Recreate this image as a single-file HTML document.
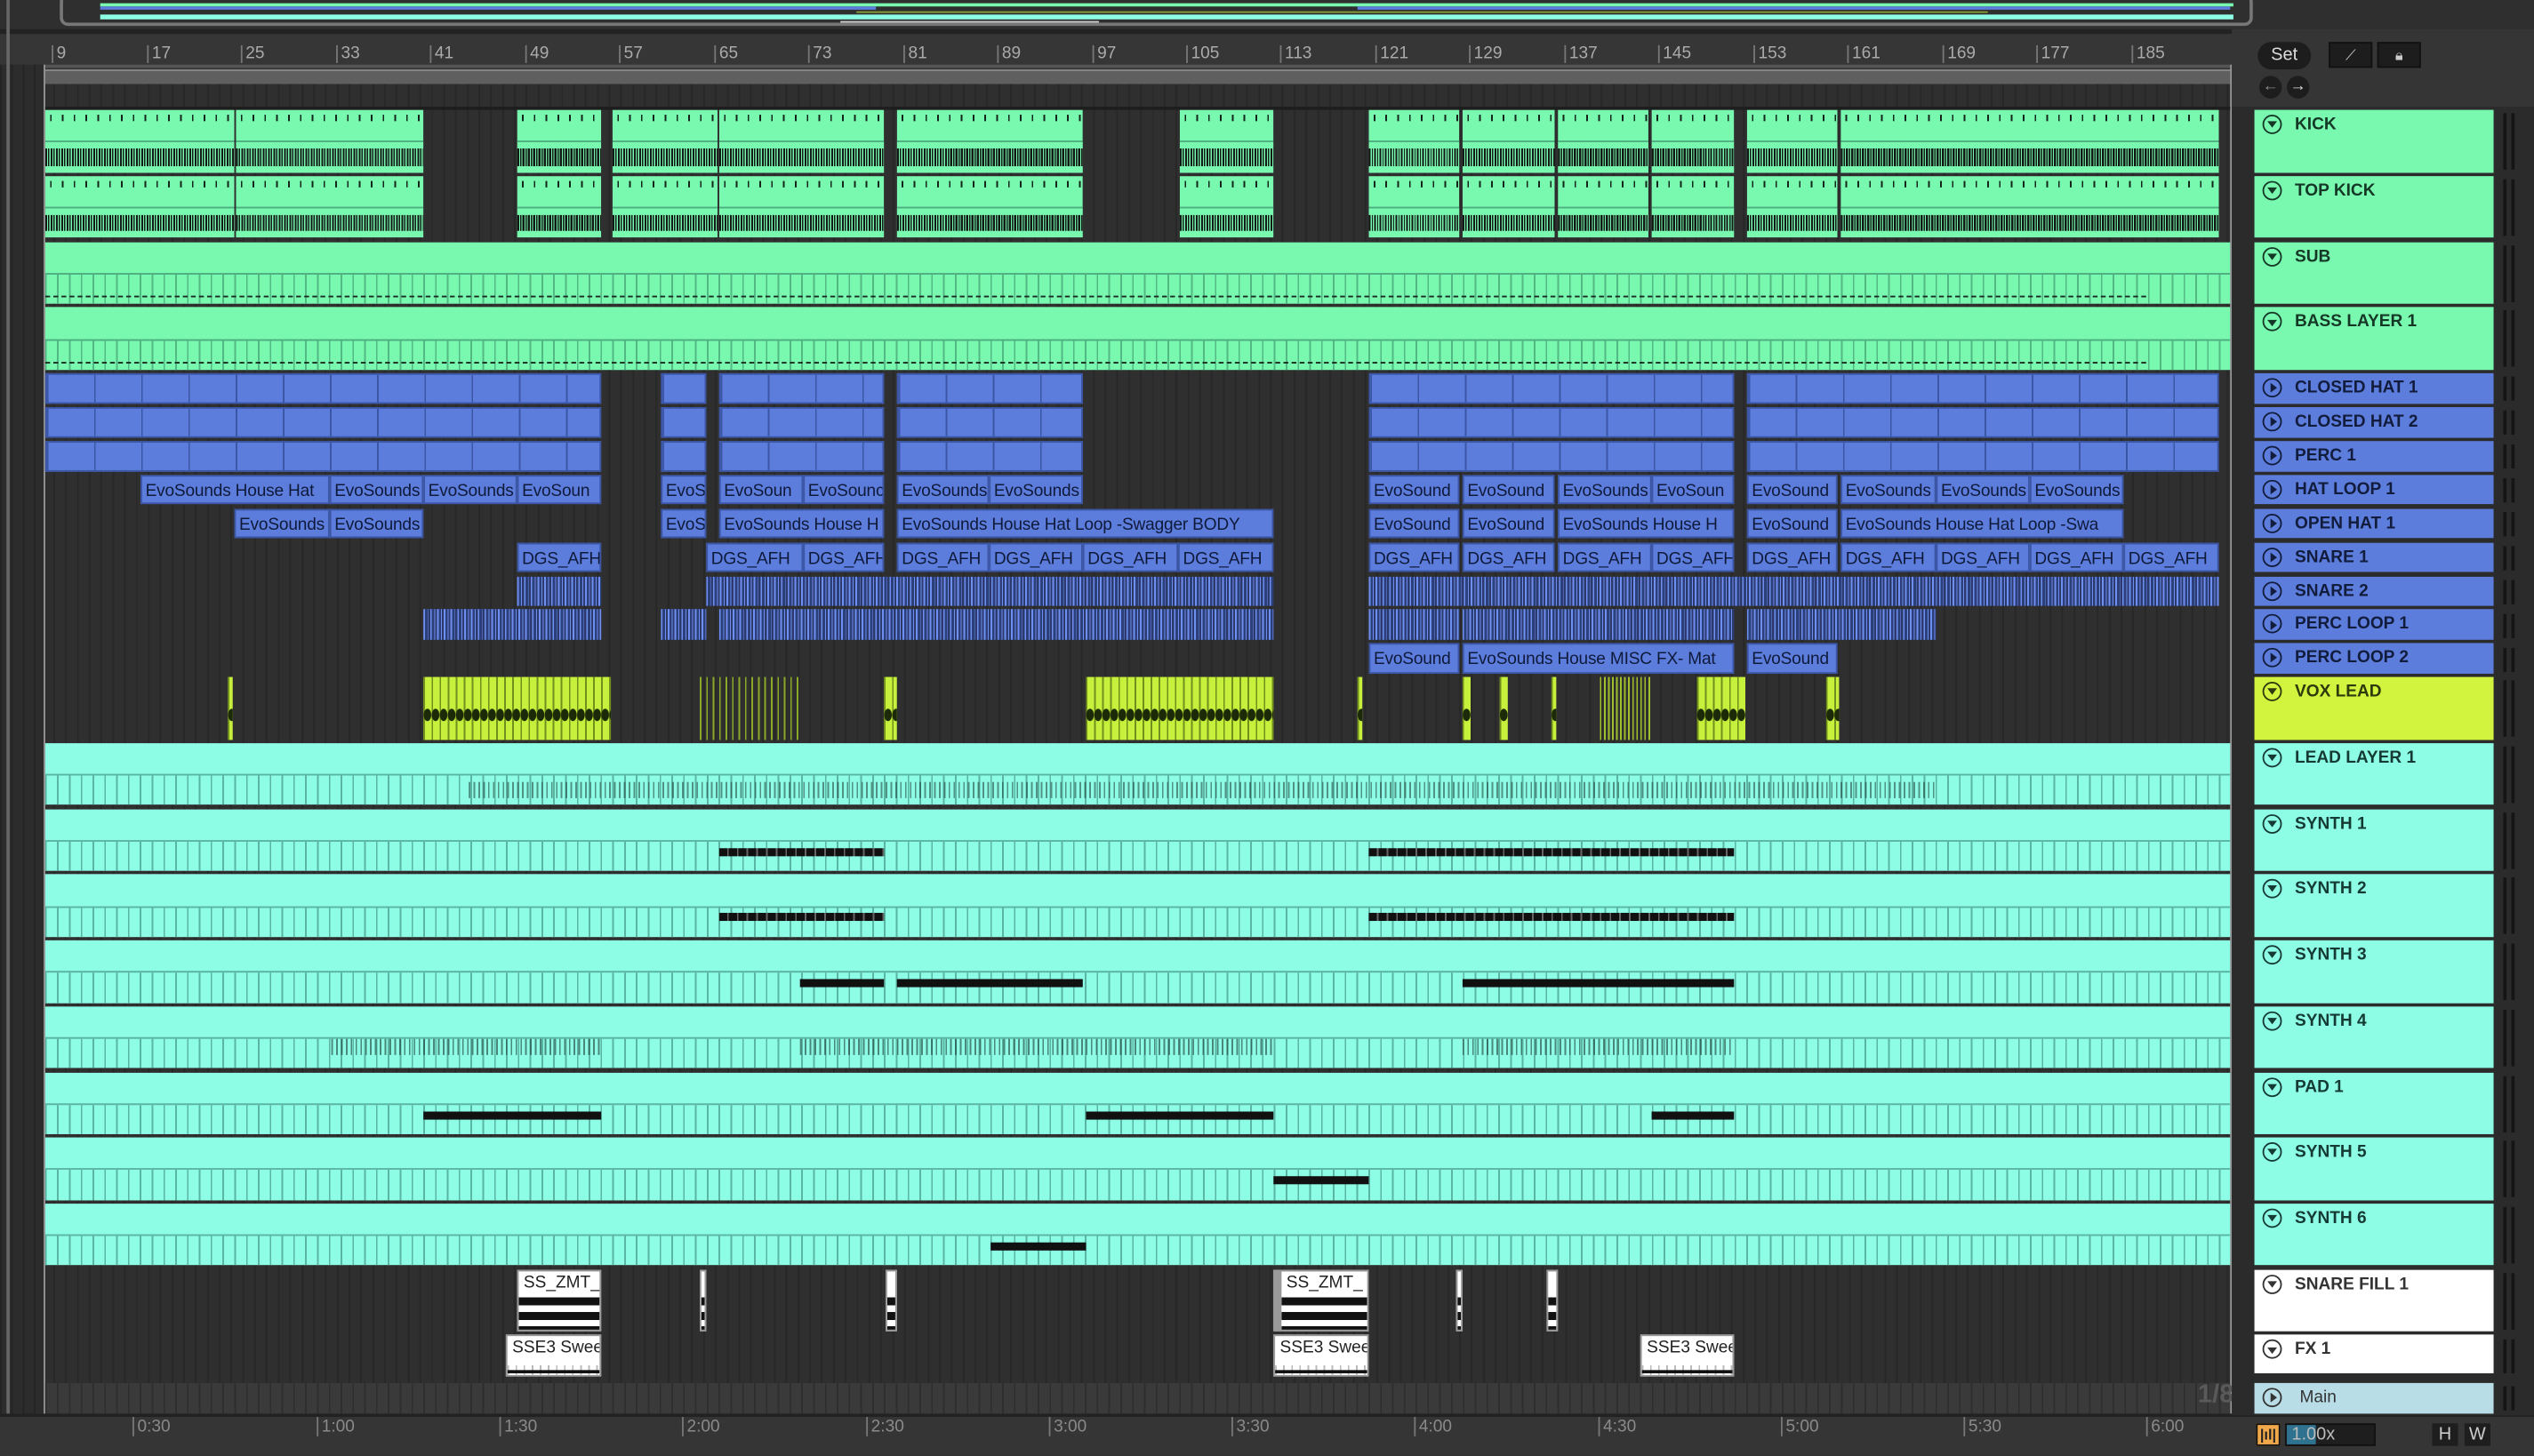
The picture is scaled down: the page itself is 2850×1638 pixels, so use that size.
<!DOCTYPE html>
<html><head><meta charset="utf-8">
<style>
*{margin:0;padding:0;box-sizing:border-box}
html,body{width:2850px;height:1638px;overflow:hidden;background:#2b2b2b}
#s{position:absolute;left:0;top:0;width:1568px;height:901px;transform:scale(1.8176);transform-origin:0 0;font-family:"Liberation Sans",sans-serif;background:#363636}
.a{position:absolute}
.arr{position:absolute;left:28px;top:52px;width:1352px;height:804px;background:#2f2f2f;
 background-image:repeating-linear-gradient(90deg,#272727 0 1px,transparent 1px 7.31px);background-position:5px 0}
.row{position:absolute;left:0;width:1352px;background:transparent}
.c{position:absolute;top:0;height:100%;overflow:hidden;white-space:nowrap}
.g{background:#79f9b0}
.b{background:#5d7ddc;border:1px solid #3c56a6}
.bs{background-color:#5d7ddc;background-image:repeating-linear-gradient(90deg,#3c56a6 0 1px,transparent 1px 29.2px);border:1px solid #3c56a6}
.cy{background:#8efde6}
.lab{font-size:10.5px;color:#0f1a3a;line-height:18px;padding-left:2px;letter-spacing:-.1px}
.hd{position:absolute;left:1395px;width:148px;font-weight:bold;font-size:10.5px;color:#153826;padding-left:25px;line-height:18px}
.ic{position:absolute;left:5px;top:3px;width:12px;height:12px;border:1.2px solid currentColor;border-radius:50%}
.dn::after{content:"";position:absolute;left:2.2px;top:3.2px;border-left:3.4px solid transparent;border-right:3.4px solid transparent;border-top:4.5px solid currentColor}
.rt::after{content:"";position:absolute;left:3.5px;top:2.2px;border-top:3.4px solid transparent;border-bottom:3.4px solid transparent;border-left:4.5px solid currentColor}
.mt{position:absolute;left:1549px;width:7px;border-left:2px solid #151515;border-right:2px solid #151515}
.gl{background-image:repeating-linear-gradient(90deg,#52b884 0 1px,transparent 1px 7.31px)}
.cl{background-image:repeating-linear-gradient(90deg,#5bb5a3 0 1px,transparent 1px 7.31px)}
.kt{background-color:#79f9b0;background-image:repeating-linear-gradient(90deg,transparent 0 3px,#14261b 3px 4px,transparent 4px 7.31px);background-size:100% 4px;background-repeat:repeat-x;background-position:0 3px}
.wf{background-color:#79f9b0;background-image:linear-gradient(#79f9b0 0 4px,transparent 4px calc(100% - 4px),#79f9b0 calc(100% - 4px)),repeating-linear-gradient(90deg,#111a14 0 1.2px,transparent 1.2px 1.8px,#111a14 1.8px 2.6px,transparent 2.6px 3.3px);border-top:1px solid #4fae80}
.rl{position:absolute;top:28px;font-size:10.5px;color:#aaa;border-left:1px solid #777;padding-left:2px;line-height:11px}
.tl{position:absolute;top:877px;font-size:10.5px;color:#8a8a8a;border-left:1px solid #777;padding-left:2px;line-height:12px}
.bar{position:absolute;height:5px;background:#111}
.vl{background-image:repeating-linear-gradient(90deg,#6f8ff0 0 1px,#2b3f7a 1px 2.5px,#6f8ff0 2.5px 3px,#2b3a6a 3px 4.2px);background-color:#34447a}
.y{background-color:#c6f03c;background-image:radial-gradient(ellipse 2.5px 4px at 50% 50%,#1d2a08 0 90%,transparent 100%),repeating-linear-gradient(90deg,#708f1c 0 1px,transparent 1px 5px);background-size:5px 9px,auto;background-position:0 19px,0 0;background-repeat:repeat-x,repeat}
.w{background:#fff;border:1px solid #999;color:#222;font-size:10.5px;line-height:14px;padding-left:3px}
</style></head><body><div id="s">

<!-- overview -->
<div class="a" style="left:0;top:0;width:1568px;height:18px;background:#2f2f2f"></div>
<div class="a" style="left:37px;top:-4px;width:1357px;height:20px;border:2px solid #777;border-radius:5px"></div>
<div class="a" style="left:62px;top:2px;width:1320px;height:2px;background:#79f9b0"></div>
<div class="a" style="left:62px;top:4px;width:480px;height:2px;background:#5d7ddc"></div>
<div class="a" style="left:840px;top:4px;width:540px;height:2px;background:#5d7ddc"></div>
<div class="a" style="left:530px;top:7px;width:700px;height:1px;background:#c6f03c;opacity:.6"></div>
<div class="a" style="left:62px;top:9px;width:1320px;height:3px;background:#8efde6"></div>
<div class="a" style="left:520px;top:13px;width:160px;height:1px;background:#ccc"></div>
<div class="a" style="left:0;top:18px;width:1568px;height:3px;background:#222"></div>

<!-- ruler -->
<div class="a" style="left:28px;top:40px;width:1352px;height:2px;background:#555"></div>
<div class="rl" style="left:32px">9</div><div class="rl" style="left:91px">17</div><div class="rl" style="left:149px">25</div><div class="rl" style="left:208px">33</div><div class="rl" style="left:266px">41</div><div class="rl" style="left:325px">49</div><div class="rl" style="left:383px">57</div><div class="rl" style="left:442px">65</div><div class="rl" style="left:500px">73</div><div class="rl" style="left:559px">81</div><div class="rl" style="left:617px">89</div><div class="rl" style="left:676px">97</div><div class="rl" style="left:734px">105</div><div class="rl" style="left:792px">113</div><div class="rl" style="left:851px">121</div><div class="rl" style="left:909px">129</div><div class="rl" style="left:968px">137</div><div class="rl" style="left:1026px">145</div><div class="rl" style="left:1085px">153</div><div class="rl" style="left:1143px">161</div><div class="rl" style="left:1202px">169</div><div class="rl" style="left:1260px">177</div><div class="rl" style="left:1319px">185</div>

<!-- left margin -->
<div class="a" style="left:0;top:40px;width:28px;height:836px;background:#2c2c2c;background-image:repeating-linear-gradient(90deg,#242424 0 1px,transparent 1px 7px)"></div>
<div class="a" style="left:4px;top:0;width:2px;height:901px;background:#666"></div>

<div class="arr">
 <div class="a" style="left:0;top:-9px;width:1352px;height:9px;background:#5f5f5f;border-top:1px solid #888"></div>
</div>
<div class="a" style="left:27px;top:40px;width:1px;height:836px;background:#999"></div>
<div class="a" style="left:1380px;top:40px;width:1px;height:836px;background:#999"></div>

<!-- tracks area -->
<div class="a" style="left:28px;top:0;width:1352px;height:901px">
<div class="a" style="left:0;top:66px;width:1352px;height:2px;background:#1e1e1e"></div>

<!-- KICK -->
<div class="row" style="top:68.2px;height:38.5px">
<div class="c" style="left:0;width:117px"><div class="a kt" style="width:100%;height:50%"></div><div class="a wf" style="top:50%;width:100%;height:50%"></div></div>
<div class="c" style="left:118px;width:116px"><div class="a kt" style="width:100%;height:50%"></div><div class="a wf" style="top:50%;width:100%;height:50%"></div></div>
<div class="c" style="left:292px;width:52px"><div class="a kt" style="width:100%;height:50%"></div><div class="a wf" style="top:50%;width:100%;height:50%"></div></div>
<div class="c" style="left:351px;width:65px"><div class="a kt" style="width:100%;height:50%"></div><div class="a wf" style="top:50%;width:100%;height:50%"></div></div>
<div class="c" style="left:417px;width:102px"><div class="a kt" style="width:100%;height:50%"></div><div class="a wf" style="top:50%;width:100%;height:50%"></div></div>
<div class="c" style="left:527px;width:115px"><div class="a kt" style="width:100%;height:50%"></div><div class="a wf" style="top:50%;width:100%;height:50%"></div></div>
<div class="c" style="left:702px;width:58px"><div class="a kt" style="width:100%;height:50%"></div><div class="a wf" style="top:50%;width:100%;height:50%"></div></div>
<div class="c" style="left:819px;width:56px"><div class="a kt" style="width:100%;height:50%"></div><div class="a wf" style="top:50%;width:100%;height:50%"></div></div>
<div class="c" style="left:877px;width:57px"><div class="a kt" style="width:100%;height:50%"></div><div class="a wf" style="top:50%;width:100%;height:50%"></div></div>
<div class="c" style="left:936px;width:56px"><div class="a kt" style="width:100%;height:50%"></div><div class="a wf" style="top:50%;width:100%;height:50%"></div></div>
<div class="c" style="left:994px;width:51px"><div class="a kt" style="width:100%;height:50%"></div><div class="a wf" style="top:50%;width:100%;height:50%"></div></div>
<div class="c" style="left:1053px;width:56px"><div class="a kt" style="width:100%;height:50%"></div><div class="a wf" style="top:50%;width:100%;height:50%"></div></div>
<div class="c" style="left:1111px;width:234px"><div class="a kt" style="width:100%;height:50%"></div><div class="a wf" style="top:50%;width:100%;height:50%"></div></div>
</div>
<div class="row" style="top:108.9px;height:38.5px">
<div class="c" style="left:0;width:117px"><div class="a kt" style="width:100%;height:50%"></div><div class="a wf" style="top:50%;width:100%;height:50%"></div></div>
<div class="c" style="left:118px;width:116px"><div class="a kt" style="width:100%;height:50%"></div><div class="a wf" style="top:50%;width:100%;height:50%"></div></div>
<div class="c" style="left:292px;width:52px"><div class="a kt" style="width:100%;height:50%"></div><div class="a wf" style="top:50%;width:100%;height:50%"></div></div>
<div class="c" style="left:351px;width:65px"><div class="a kt" style="width:100%;height:50%"></div><div class="a wf" style="top:50%;width:100%;height:50%"></div></div>
<div class="c" style="left:417px;width:102px"><div class="a kt" style="width:100%;height:50%"></div><div class="a wf" style="top:50%;width:100%;height:50%"></div></div>
<div class="c" style="left:527px;width:115px"><div class="a kt" style="width:100%;height:50%"></div><div class="a wf" style="top:50%;width:100%;height:50%"></div></div>
<div class="c" style="left:702px;width:58px"><div class="a kt" style="width:100%;height:50%"></div><div class="a wf" style="top:50%;width:100%;height:50%"></div></div>
<div class="c" style="left:819px;width:56px"><div class="a kt" style="width:100%;height:50%"></div><div class="a wf" style="top:50%;width:100%;height:50%"></div></div>
<div class="c" style="left:877px;width:57px"><div class="a kt" style="width:100%;height:50%"></div><div class="a wf" style="top:50%;width:100%;height:50%"></div></div>
<div class="c" style="left:936px;width:56px"><div class="a kt" style="width:100%;height:50%"></div><div class="a wf" style="top:50%;width:100%;height:50%"></div></div>
<div class="c" style="left:994px;width:51px"><div class="a kt" style="width:100%;height:50%"></div><div class="a wf" style="top:50%;width:100%;height:50%"></div></div>
<div class="c" style="left:1053px;width:56px"><div class="a kt" style="width:100%;height:50%"></div><div class="a wf" style="top:50%;width:100%;height:50%"></div></div>
<div class="c" style="left:1111px;width:234px"><div class="a kt" style="width:100%;height:50%"></div><div class="a wf" style="top:50%;width:100%;height:50%"></div></div>
</div>

<!-- SUB, BASS -->
<div class="row" style="top:149.6px;height:38.5px"><div class="c g" style="left:0;width:1352px;height:50%"></div><div class="c g gl" style="left:0;top:50%;width:1352px;height:50%;border-top:1px solid #4fae80"><div class="a" style="left:0;bottom:4px;width:1300px;border-bottom:1px dashed #1a2a20"></div></div></div>
<div class="row" style="top:190.4px;height:38.5px"><div class="c g" style="left:0;width:1352px;height:50%"></div><div class="c g gl" style="left:0;top:50%;width:1352px;height:50%;border-top:1px solid #4fae80"><div class="a" style="left:0;bottom:4px;width:1300px;border-bottom:1px dashed #1a2a20"></div></div></div>

<!-- CH1, CH2, PERC1 -->
<div class="row" style="top:231.1px;height:18.7px"><div class="c bs" style="left:0;width:344px"></div><div class="c bs" style="left:381px;width:28px"></div><div class="c bs" style="left:417px;width:102px"></div><div class="c bs" style="left:527px;width:115px"></div><div class="c bs" style="left:819px;width:226px"></div><div class="c bs" style="left:1053px;width:292px"></div></div>
<div class="row" style="top:252px;height:18.7px"><div class="c bs" style="left:0;width:344px"></div><div class="c bs" style="left:381px;width:28px"></div><div class="c bs" style="left:417px;width:102px"></div><div class="c bs" style="left:527px;width:115px"></div><div class="c bs" style="left:819px;width:226px"></div><div class="c bs" style="left:1053px;width:292px"></div></div>
<div class="row" style="top:272.9px;height:18.7px"><div class="c bs" style="left:0;width:344px"></div><div class="c bs" style="left:381px;width:28px"></div><div class="c bs" style="left:417px;width:102px"></div><div class="c bs" style="left:527px;width:115px"></div><div class="c bs" style="left:819px;width:226px"></div><div class="c bs" style="left:1053px;width:292px"></div></div>

<!-- HAT LOOP -->
<div class="row" style="top:293.8px;height:18.7px">
<div class="c b lab" style="left:59px;width:117px">EvoSounds House Hat</div><div class="c b lab" style="left:176px;width:58px">EvoSounds</div><div class="c b lab" style="left:234px;width:58px">EvoSounds</div><div class="c b lab" style="left:292px;width:52px">EvoSoun</div>
<div class="c b lab" style="left:381px;width:28px">EvoS</div><div class="c b lab" style="left:417px;width:52px">EvoSoun</div><div class="c b lab" style="left:469px;width:50px">EvoSounc</div>
<div class="c b lab" style="left:527px;width:57px">EvoSounds</div><div class="c b lab" style="left:584px;width:58px">EvoSounds</div>
<div class="c b lab" style="left:819px;width:56px">EvoSound</div><div class="c b lab" style="left:877px;width:57px">EvoSound</div><div class="c b lab" style="left:936px;width:58px">EvoSounds</div><div class="c b lab" style="left:994px;width:51px">EvoSoun</div>
<div class="c b lab" style="left:1053px;width:56px">EvoSound</div><div class="c b lab" style="left:1111px;width:59px">EvoSounds</div><div class="c b lab" style="left:1170px;width:58px">EvoSounds</div><div class="c b lab" style="left:1228px;width:58px">EvoSounds</div>
</div>
<!-- OPEN HAT -->
<div class="row" style="top:314.7px;height:18.7px">
<div class="c b lab" style="left:117px;width:59px">EvoSounds</div><div class="c b lab" style="left:176px;width:58px">EvoSounds</div>
<div class="c b lab" style="left:381px;width:28px">EvoS</div><div class="c b lab" style="left:417px;width:102px">EvoSounds House H</div>
<div class="c b lab" style="left:527px;width:233px">EvoSounds House Hat Loop -Swagger BODY</div>
<div class="c b lab" style="left:819px;width:56px">EvoSound</div><div class="c b lab" style="left:877px;width:57px">EvoSound</div><div class="c b lab" style="left:936px;width:109px">EvoSounds House H</div>
<div class="c b lab" style="left:1053px;width:56px">EvoSound</div><div class="c b lab" style="left:1111px;width:175px">EvoSounds House Hat Loop -Swa</div>
</div>
<!-- SNARE 1 -->
<div class="row" style="top:335.6px;height:18.7px">
<div class="c b lab" style="left:292px;width:52px">DGS_AFH</div>
<div class="c b lab" style="left:409px;width:60px">DGS_AFH</div><div class="c b lab" style="left:469px;width:50px">DGS_AFH</div>
<div class="c b lab" style="left:527px;width:57px">DGS_AFH</div><div class="c b lab" style="left:584px;width:58px">DGS_AFH</div><div class="c b lab" style="left:642px;width:59px">DGS_AFH</div><div class="c b lab" style="left:701px;width:59px">DGS_AFH</div>
<div class="c b lab" style="left:819px;width:56px">DGS_AFH</div><div class="c b lab" style="left:877px;width:57px">DGS_AFH</div><div class="c b lab" style="left:936px;width:58px">DGS_AFH</div><div class="c b lab" style="left:994px;width:51px">DGS_AFH</div>
<div class="c b lab" style="left:1053px;width:56px">DGS_AFH</div><div class="c b lab" style="left:1111px;width:59px">DGS_AFH</div><div class="c b lab" style="left:1170px;width:58px">DGS_AFH</div><div class="c b lab" style="left:1228px;width:58px">DGS_AFH</div><div class="c b lab" style="left:1286px;width:59px">DGS_AFH</div>
</div>
<!-- SNARE 2 -->
<div class="row" style="top:356.5px;height:18.7px">
<div class="c vl" style="left:292px;width:52px"></div><div class="c vl" style="left:409px;width:351px"></div><div class="c vl" style="left:819px;width:526px"></div>
</div>
<!-- PERC LOOP 1 -->
<div class="row" style="top:377.4px;height:18.7px">
<div class="c vl" style="left:234px;width:110px"></div><div class="c vl" style="left:381px;width:28px"></div><div class="c vl" style="left:417px;width:343px"></div><div class="c vl" style="left:819px;width:56px"></div><div class="c vl" style="left:877px;width:168px"></div><div class="c vl" style="left:1053px;width:117px"></div>
</div>
<!-- PERC LOOP 2 -->
<div class="row" style="top:398.3px;height:18.7px">
<div class="c b lab" style="left:819px;width:56px">EvoSound</div><div class="c b lab" style="left:877px;width:168px">EvoSounds House MISC FX- Mat</div><div class="c b lab" style="left:1053px;width:56px">EvoSound</div>
</div>
<!-- VOX -->
<div class="row" style="top:419.2px;height:38.5px">
<div class="c y" style="left:113px;width:3px"></div><div class="c y" style="left:234px;width:116px"></div>
<div class="c" style="left:405px;width:62px;background:repeating-linear-gradient(90deg,#8aa82a 0 1px,transparent 1px 4px)"></div>
<div class="c y" style="left:519px;width:8px"></div><div class="c y" style="left:644px;width:116px"></div><div class="c y" style="left:812px;width:3px"></div>
<div class="c y" style="left:877px;width:5px"></div><div class="c y" style="left:900px;width:5px"></div><div class="c y" style="left:932px;width:3px"></div>
<div class="c" style="left:962px;width:32px;background:repeating-linear-gradient(90deg,#9fbf2c 0 1px,transparent 1px 2.5px)"></div>
<div class="c y" style="left:1022px;width:30px"></div><div class="c y" style="left:1102px;width:8px"></div>
</div>
<!-- LEAD LAYER -->
<div class="row" style="top:459.9px;height:38.5px"><div class="c cy" style="left:0;width:1352px;height:50%"></div><div class="c cy cl" style="left:0;top:50%;width:1352px;height:50%;border-top:1px solid #5bb5a3"><div class="a" style="left:262px;top:4px;width:908px;height:10px;background:repeating-linear-gradient(90deg,#1d3a34 0 1px,transparent 1px 3px);opacity:.55"></div></div></div>
<!-- SYNTHS -->
<div class="row" style="top:500.6px;height:38.5px"><div class="c cy" style="left:0;width:1352px;height:50%"></div><div class="c cy cl" style="left:0;top:50%;width:1352px;height:50%;border-top:1px solid #5bb5a3"></div><div class="bar" style="left:417px;top:24px;width:102px;background:repeating-linear-gradient(90deg,#111 0 5px,#666 5px 6px)"></div><div class="bar" style="left:819px;top:24px;width:226px;background:repeating-linear-gradient(90deg,#111 0 5px,#666 5px 6px)"></div></div>
<div class="row" style="top:541.3px;height:38.5px"><div class="c cy" style="left:0;width:1352px;height:50%"></div><div class="c cy cl" style="left:0;top:50%;width:1352px;height:50%;border-top:1px solid #5bb5a3"></div><div class="bar" style="left:417px;top:24px;width:102px;background:repeating-linear-gradient(90deg,#111 0 5px,#666 5px 6px)"></div><div class="bar" style="left:819px;top:24px;width:226px;background:repeating-linear-gradient(90deg,#111 0 5px,#666 5px 6px)"></div></div>
<div class="row" style="top:582.1px;height:38.5px"><div class="c cy" style="left:0;width:1352px;height:50%"></div><div class="c cy cl" style="left:0;top:50%;width:1352px;height:50%;border-top:1px solid #5bb5a3"></div><div class="bar" style="left:467px;top:24px;width:52px"></div><div class="bar" style="left:527px;top:24px;width:115px"></div><div class="bar" style="left:877px;top:24px;width:168px"></div></div>
<div class="row" style="top:622.8px;height:38.5px"><div class="c cy" style="left:0;width:1352px;height:50%"></div><div class="c cy cl" style="left:0;top:50%;width:1352px;height:50%;border-top:1px solid #5bb5a3"></div>
<div class="a" style="left:177px;top:20px;width:167px;height:10px;background:repeating-linear-gradient(90deg,#1d3a34 0 1px,transparent 1px 3px);opacity:.6"></div><div class="a" style="left:467px;top:20px;width:293px;height:10px;background:repeating-linear-gradient(90deg,#1d3a34 0 1px,transparent 1px 3px);opacity:.6"></div><div class="a" style="left:877px;top:20px;width:168px;height:10px;background:repeating-linear-gradient(90deg,#1d3a34 0 1px,transparent 1px 3px);opacity:.6"></div></div>
<div class="row" style="top:663.5px;height:38.5px"><div class="c cy" style="left:0;width:1352px;height:50%"></div><div class="c cy cl" style="left:0;top:50%;width:1352px;height:50%;border-top:1px solid #5bb5a3"></div><div class="bar" style="left:234px;top:24px;width:110px"></div><div class="bar" style="left:644px;top:24px;width:116px"></div><div class="bar" style="left:994px;top:24px;width:51px"></div></div>
<div class="row" style="top:704.2px;height:38.5px"><div class="c cy" style="left:0;width:1352px;height:50%"></div><div class="c cy cl" style="left:0;top:50%;width:1352px;height:50%;border-top:1px solid #5bb5a3"></div><div class="bar" style="left:760px;top:24px;width:59px"></div></div>
<div class="row" style="top:744.9px;height:38.5px"><div class="c cy" style="left:0;width:1352px;height:50%"></div><div class="c cy cl" style="left:0;top:50%;width:1352px;height:50%;border-top:1px solid #5bb5a3"></div><div class="bar" style="left:585px;top:24px;width:59px"></div></div>
<!-- SNARE FILL -->
<div class="row" style="top:785.6px;height:38.5px">
<div class="c w" style="left:292px;width:52px">SS_ZMT_<div class="a" style="left:0;top:16px;width:100%;height:22px;background:repeating-linear-gradient(180deg,#111 0 5px,#fff 5px 9px)"></div></div>
<div class="c w" style="left:405px;width:4px;padding:0"><div class="a" style="left:0;top:16px;width:100%;height:22px;background:repeating-linear-gradient(180deg,#111 0 5px,#fff 5px 9px)"></div></div>
<div class="c w" style="left:520px;width:7px;padding:0"><div class="a" style="left:0;top:16px;width:100%;height:22px;background:repeating-linear-gradient(180deg,#111 0 5px,#fff 5px 9px)"></div></div>
<div class="c w" style="left:760px;width:59px;border-left:5px solid #999">SS_ZMT_<div class="a" style="left:0;top:16px;width:100%;height:22px;background:repeating-linear-gradient(180deg,#111 0 5px,#fff 5px 9px)"></div></div>
<div class="c w" style="left:873px;width:4px;padding:0"><div class="a" style="left:0;top:16px;width:100%;height:22px;background:repeating-linear-gradient(180deg,#111 0 5px,#fff 5px 9px)"></div></div>
<div class="c w" style="left:929px;width:7px;padding:0"><div class="a" style="left:0;top:16px;width:100%;height:22px;background:repeating-linear-gradient(180deg,#111 0 5px,#fff 5px 9px)"></div></div>
</div>
<!-- FX1 -->
<div class="row" style="top:826.4px;height:26px">
<div class="c w" style="left:285px;width:59px">SSE3 Swee<div class="a" style="left:0;top:15px;width:100%;height:9px;background:repeating-linear-gradient(90deg,#bbb 0 1px,#fff 1px 5px);border-top:3px solid #fff"><div class="a" style="left:0;top:3px;width:100%;height:2px;background:#111"></div></div></div>
<div class="c w" style="left:760px;width:59px">SSE3 Swee<div class="a" style="left:0;top:15px;width:100%;height:9px;background:repeating-linear-gradient(90deg,#bbb 0 1px,#fff 1px 5px);border-top:3px solid #fff"><div class="a" style="left:0;top:3px;width:100%;height:2px;background:#111"></div></div></div>
<div class="c w" style="left:987px;width:58px">SSE3 Swee<div class="a" style="left:0;top:15px;width:100%;height:9px;background:repeating-linear-gradient(90deg,#bbb 0 1px,#fff 1px 5px);border-top:3px solid #fff"><div class="a" style="left:0;top:3px;width:100%;height:2px;background:#111"></div></div></div>
</div>
<!-- main row -->
<div class="row" style="top:855.5px;height:19px;background:#3a3a3a;background-image:repeating-linear-gradient(90deg,#2e2e2e 0 1px,transparent 1px 7.31px)"></div>
<div class="a" style="left:1332px;top:855px;font-size:16px;font-weight:bold;color:#5a5a5a">1/8</div>
</div>

<!-- bottom bar -->
<div class="a" style="left:0;top:875px;width:1568px;height:26px;background:#353535;border-top:2px solid #222"></div>
<div class="tl" style="left:82px">0:30</div><div class="tl" style="left:196px">1:00</div><div class="tl" style="left:309px">1:30</div><div class="tl" style="left:422px">2:00</div><div class="tl" style="left:536px">2:30</div><div class="tl" style="left:649px">3:00</div><div class="tl" style="left:762px">3:30</div><div class="tl" style="left:875px">4:00</div><div class="tl" style="left:989px">4:30</div><div class="tl" style="left:1102px">5:00</div><div class="tl" style="left:1215px">5:30</div><div class="tl" style="left:1328px">6:00</div>

<!-- right panel controls -->
<div class="a" style="left:1381px;top:18px;width:187px;height:48px;background:#353535"></div>
<div class="a" style="left:1397px;top:26px;width:33px;height:17px;background:#1d1d1d;border-radius:9px;color:#ddd;font-size:11px;text-align:center;line-height:17px">Set</div>
<div class="a" style="left:1441px;top:26px;width:27px;height:16px;background:#1d1d1d;border:1px solid #111;color:#ccc;font-size:9px;text-align:center;line-height:14px">⟋</div>
<div class="a" style="left:1471px;top:26px;width:27px;height:16px;background:#1d1d1d;border:1px solid #111;color:#ccc;font-size:9px;text-align:center;line-height:14px">🔒︎</div>
<div class="a" style="left:1398px;top:47px;width:14px;height:14px;background:#1d1d1d;border-radius:50%;color:#888;font-size:10px;text-align:center;line-height:14px">←</div>
<div class="a" style="left:1415px;top:47px;width:14px;height:14px;background:#1d1d1d;border-radius:50%;color:#ddd;font-size:10px;text-align:center;line-height:14px">→</div>
<div class="a" style="left:1381px;top:66px;width:187px;height:810px;background:#2b2b2b"></div>

<!-- headers -->
<div class="hd g" style="top:68.2px;height:38.5px"><span class="ic dn"></span>KICK</div>
<div class="hd g" style="top:108.9px;height:38.5px"><span class="ic dn"></span>TOP KICK</div>
<div class="hd g" style="top:149.6px;height:38.5px"><span class="ic dn"></span>SUB</div>
<div class="hd g" style="top:190.4px;height:38.5px"><span class="ic dn"></span>BASS LAYER 1</div>
<div class="hd" style="top:231.1px;height:18.7px;background:#5d7ddc;color:#121c3c"><span class="ic rt"></span>CLOSED HAT 1</div>
<div class="hd" style="top:252px;height:18.7px;background:#5d7ddc;color:#121c3c"><span class="ic rt"></span>CLOSED HAT 2</div>
<div class="hd" style="top:272.9px;height:18.7px;background:#5d7ddc;color:#121c3c"><span class="ic rt"></span>PERC 1</div>
<div class="hd" style="top:293.8px;height:18.7px;background:#5d7ddc;color:#121c3c"><span class="ic rt"></span>HAT LOOP 1</div>
<div class="hd" style="top:314.7px;height:18.7px;background:#5d7ddc;color:#121c3c"><span class="ic rt"></span>OPEN HAT 1</div>
<div class="hd" style="top:335.6px;height:18.7px;background:#5d7ddc;color:#121c3c"><span class="ic rt"></span>SNARE 1</div>
<div class="hd" style="top:356.5px;height:18.7px;background:#5d7ddc;color:#121c3c"><span class="ic rt"></span>SNARE 2</div>
<div class="hd" style="top:377.4px;height:18.7px;background:#5d7ddc;color:#121c3c"><span class="ic rt"></span>PERC LOOP 1</div>
<div class="hd" style="top:398.3px;height:18.7px;background:#5d7ddc;color:#121c3c"><span class="ic rt"></span>PERC LOOP 2</div>
<div class="hd" style="top:419.2px;height:38.5px;background:#d2f43e;color:#2c3a0c"><span class="ic dn"></span>VOX LEAD</div>
<div class="hd cy" style="top:459.9px;height:38.5px;color:#153a33"><span class="ic dn"></span>LEAD LAYER 1</div>
<div class="hd cy" style="top:500.6px;height:38.5px;color:#153a33"><span class="ic dn"></span>SYNTH 1</div>
<div class="hd cy" style="top:541.3px;height:38.5px;color:#153a33"><span class="ic dn"></span>SYNTH 2</div>
<div class="hd cy" style="top:582.1px;height:38.5px;color:#153a33"><span class="ic dn"></span>SYNTH 3</div>
<div class="hd cy" style="top:622.8px;height:38.5px;color:#153a33"><span class="ic dn"></span>SYNTH 4</div>
<div class="hd cy" style="top:663.5px;height:38.5px;color:#153a33"><span class="ic dn"></span>PAD 1</div>
<div class="hd cy" style="top:704.2px;height:38.5px;color:#153a33"><span class="ic dn"></span>SYNTH 5</div>
<div class="hd cy" style="top:744.9px;height:38.5px;color:#153a33"><span class="ic dn"></span>SYNTH 6</div>
<div class="hd" style="top:785.6px;height:38.5px;background:#fff;color:#333"><span class="ic dn"></span>SNARE FILL 1</div>
<div class="hd" style="top:826.4px;height:24px;background:#fff;color:#333"><span class="ic dn"></span>FX 1</div>
<div class="hd" style="top:855.5px;height:19px;background:#b8dde7;color:#333;font-weight:normal;padding-left:28px"><span class="ic rt"></span>Main</div>

<!-- meters -->
<div class="mt" style="top:70px;height:35px"></div><div class="mt" style="top:111px;height:35px"></div><div class="mt" style="top:152px;height:35px"></div><div class="mt" style="top:192px;height:35px"></div>
<div class="mt" style="top:233px;height:15px"></div><div class="mt" style="top:254px;height:15px"></div><div class="mt" style="top:275px;height:15px"></div><div class="mt" style="top:296px;height:15px"></div><div class="mt" style="top:317px;height:15px"></div><div class="mt" style="top:338px;height:15px"></div><div class="mt" style="top:359px;height:15px"></div><div class="mt" style="top:380px;height:15px"></div><div class="mt" style="top:401px;height:15px"></div>
<div class="mt" style="top:421px;height:35px"></div><div class="mt" style="top:462px;height:35px"></div><div class="mt" style="top:503px;height:35px"></div><div class="mt" style="top:543px;height:35px"></div><div class="mt" style="top:584px;height:35px"></div><div class="mt" style="top:625px;height:35px"></div><div class="mt" style="top:666px;height:35px"></div><div class="mt" style="top:706px;height:35px"></div><div class="mt" style="top:747px;height:35px"></div><div class="mt" style="top:788px;height:35px"></div><div class="mt" style="top:829px;height:21px"></div><div class="mt" style="top:858px;height:15px"></div>

<!-- bottom right -->
<div class="a" style="left:1396px;top:881px;width:15px;height:14px;background:#f0a84a;border:1px solid #111;color:#222;font-size:9px;text-align:center;line-height:12px;font-weight:bold">|ıl|</div>
<div class="a" style="left:1414px;top:881px;width:56px;height:14px;background:#1e1e1e;border:1px solid #111"><div class="a" style="left:0;top:0;width:18px;height:12px;background:#2f7290"></div><div class="a" style="left:3px;top:0;color:#bbb;font-size:11px;line-height:12px">1.00x</div></div>
<div class="a" style="left:1505px;top:881px;width:16px;height:14px;background:#1e1e1e;color:#ccc;font-size:11px;text-align:center;line-height:14px">H</div>
<div class="a" style="left:1525px;top:881px;width:16px;height:14px;background:#1e1e1e;color:#ccc;font-size:11px;text-align:center;line-height:14px">W</div>

</div></body></html>
